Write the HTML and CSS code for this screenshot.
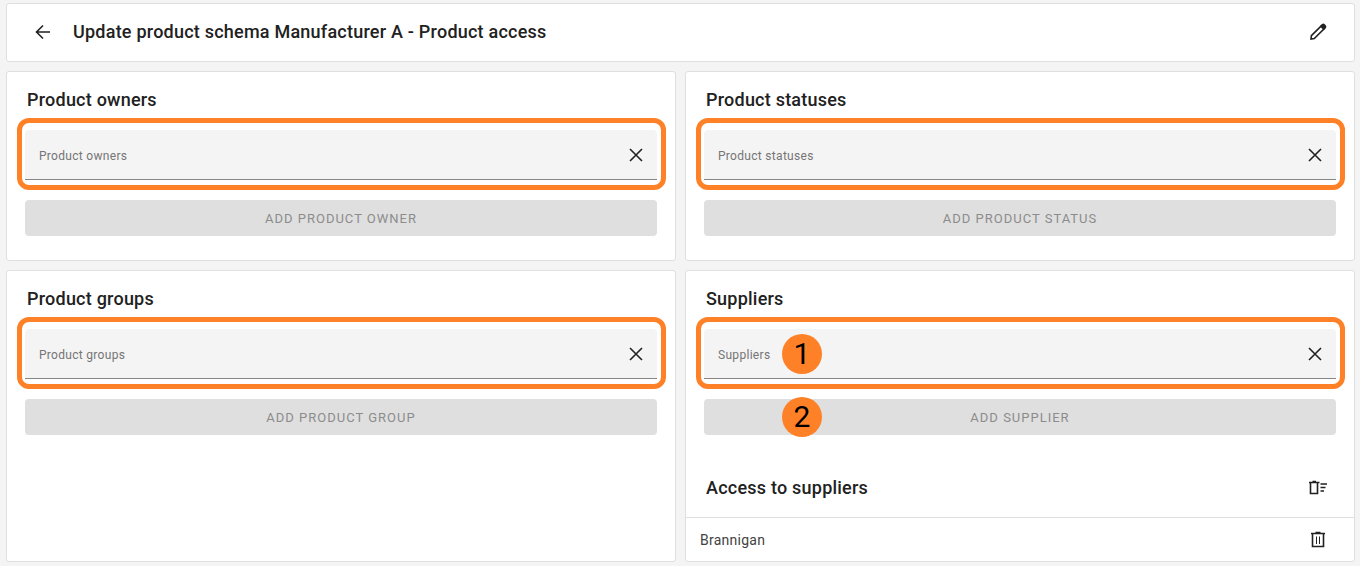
FILE: index.html
```html
<!DOCTYPE html>
<html lang="en">
<head>
    <meta charset="UTF-8">
    <meta name="viewport" content="width=device-width, initial-scale=1.0">
    <title>Update product schema</title>
    <link rel="stylesheet" href="styles.css">
</head>
<body>
    <header class="card page-header">
        <button type="button" class="icon-button" aria-label="Back">
            <svg class="icon" viewBox="0 0 24 24"><path d="M19 12H6M12 5.500L5.500 12l6.500 6.500"/></svg>
        </button>
        <h1>Update product schema Manufacturer A - Product access</h1>
        <button type="button" class="icon-button" aria-label="Edit">
            <svg class="icon" viewBox="0 0 24 24"><path d="M5 19l.4-3.300L15.500 5.600l2.900 2.900L8.300 18.600z"/><path class="fill" d="M13.800 6.300l2-2c1-1 2.200-.9 3 0l.9.9c.9.9.9 2 0 3l-2 2z"/></svg>
        </button>
    </header>

    <main class="cards">
        <section class="card">
            <div class="card-body">
                <h2>Product owners</h2>
                <div class="field">
                    <label for="owners">Product owners</label>
                    <input type="text" id="owners">
                    <button type="button" class="icon-button" aria-label="Clear product owners">
                        <svg class="icon" viewBox="0 0 24 24"><path d="M6 6l12 12M18 6L6 18"/></svg>
                    </button>
                </div>
                <button type="button" class="add-button" disabled>Add product owner</button>
            </div>
        </section>

        <section class="card">
            <div class="card-body">
                <h2>Product statuses</h2>
                <div class="field">
                    <label for="statuses">Product statuses</label>
                    <input type="text" id="statuses">
                    <button type="button" class="icon-button" aria-label="Clear product statuses">
                        <svg class="icon" viewBox="0 0 24 24"><path d="M6 6l12 12M18 6L6 18"/></svg>
                    </button>
                </div>
                <button type="button" class="add-button" disabled>Add product status</button>
            </div>
        </section>

        <section class="card">
            <div class="card-body">
                <h2>Product groups</h2>
                <div class="field">
                    <label for="groups">Product groups</label>
                    <input type="text" id="groups">
                    <button type="button" class="icon-button" aria-label="Clear product groups">
                        <svg class="icon" viewBox="0 0 24 24"><path d="M6 6l12 12M18 6L6 18"/></svg>
                    </button>
                </div>
                <button type="button" class="add-button" disabled>Add product group</button>
            </div>
        </section>

        <section class="card">
            <div class="card-body">
                <h2>Suppliers</h2>
                <div class="field">
                    <label for="suppliers">Suppliers</label>
                    <input type="text" id="suppliers">
                    <button type="button" class="icon-button" aria-label="Clear suppliers">
                        <svg class="icon" viewBox="0 0 24 24"><path d="M6 6l12 12M18 6L6 18"/></svg>
                    </button>
                    <span class="step">1</span>
                </div>
                <div class="add-row">
                    <button type="button" class="add-button" disabled>Add supplier</button>
                    <span class="step">2</span>
                </div>
            </div>

            <!-- Suppliers that have access -->
            <div class="access-header">
                <h2>Access to suppliers</h2>
                <button type="button" class="icon-button" aria-label="Remove all suppliers">
                    <svg class="icon" viewBox="0 0 24 24"><path d="M4.500 7V17.500h7V7M3 6.500h10.500M6.500 5.500h3.500M14.500 8h6.500M14.500 11.500h5M14.500 15h3.500"/></svg>
                </button>
            </div>
            <ul class="access-list">
                <li>
                    <span>Brannigan</span>
                    <button type="button" class="icon-button" aria-label="Remove Brannigan">
                        <svg class="icon" viewBox="0 0 24 24"><path d="M6.500 5.500V18.500h11V5.500M5 5.500h14M9.500 4.500h5"/><path class="thin" d="M10.500 8.500v7.500M13.500 8.500v7.500"/></svg>
                    </button>
                </li>
            </ul>
        </section>
    </main>
</body>
</html>
```

FILE: styles.css
```css
* {
    box-sizing: border-box;
}

body {
    margin: 0;
    padding: 3px 5px 4px 6px;
    font-family: Roboto, 'Liberation Sans', sans-serif;
    color: #212121;
    background-color: #f4f4f4;
}

h1, h2 {
    margin: 0;
    font-size: 18px;
    font-weight: 500;
    line-height: 24px;
    letter-spacing: 0.0125em;
}

.card {
    border: 1px solid #dfdfdf;
    border-radius: 3px;
    background-color: #fff;
}

.page-header {
    display: flex;
    align-items: center;
    gap: 18px;
    padding: 16px 24px 17px;
    margin-bottom: 9px;
}

.page-header h1 {
    flex: 1;
}

.cards {
    display: grid;
    grid-template-columns: 1fr 1fr;
    gap: 9px;
}

.card-body {
    display: flex;
    flex-direction: column;
    padding: 16px 18px 24px;
}

.card-body h2 {
    padding: 0 2px;
    margin-bottom: 18px;
}

.icon-button {
    display: flex;
    padding: 0;
    border: none;
    color: inherit;
    background: none;
    cursor: pointer;
}

.icon {
    width: 24px;
    height: 24px;
    fill: none;
    stroke: #212121;
    stroke-width: 1.6;
}

.icon .fill {
    fill: #212121;
    stroke: none;
}

.icon .thin {
    stroke-width: 1;
}

/* Text field with the orange highlight drawn round it */
.field {
    position: relative;
    display: flex;
    align-items: center;
    height: 50px;
    padding: 0 9px 0 14px;
    margin-bottom: 20px;
    border-bottom: 1px solid #858585;
    border-radius: 4px 4px 0 0;
    background-color: #f4f4f4;
}

.field::after {
    content: "";
    position: absolute;
    inset: -12px -9px -11px -8px;
    border: 5px solid #ff8127;
    border-radius: 12px;
    pointer-events: none;
}

.field label {
    padding-top: 2px;
    font-size: 12px;
    line-height: 16px;
    letter-spacing: 0.025em;
    color: #757575;
}

.field input {
    flex: 1;
    min-width: 0;
    border: none;
    outline: none;
    font: inherit;
    background: none;
}

.add-row {
    position: relative;
    display: flex;
}

.add-button {
    flex: 1;
    min-height: 36px;
    padding: 0 16px;
    border: none;
    border-radius: 4px;
    font-family: inherit;
    font-size: 13px;
    font-weight: 400;
    letter-spacing: 1px;
    text-transform: uppercase;
    color: #8c8c8c;
    background-color: #dfdfdf;
}

/* Numbered markers */
.step {
    position: absolute;
    top: 50%;
    left: 78px;
    width: 40px;
    height: 40px;
    margin-top: -20px;
    border-radius: 50%;
    font-size: 30px;
    line-height: 40px;
    text-align: center;
    color: #000;
    background-color: #ff8127;
}

.access-header {
    display: flex;
    align-items: center;
    justify-content: space-between;
    height: 59px;
    padding: 0 24px 0 20px;
    border-bottom: 1px solid #dfdfdf;
}

.access-list {
    padding: 0;
    margin: 0;
    list-style: none;
}

.access-list li {
    display: flex;
    align-items: center;
    justify-content: space-between;
    height: 43px;
    padding: 0 24px 0 14px;
    font-size: 14px;
    line-height: 20px;
    letter-spacing: 0.0178em;
    color: #424242;
}
```
